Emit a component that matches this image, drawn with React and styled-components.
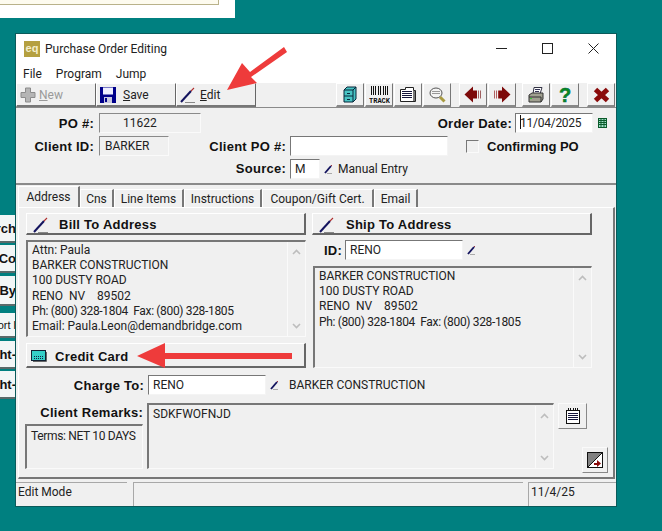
import React from 'react';
import styled, { createGlobalStyle } from 'styled-components';

const ui = 'Roboto, "Open Sans", sans-serif';
const bold = '"Liberation Sans", Arial, sans-serif';

const Global = createGlobalStyle`
  html, body { margin: 0; padding: 0; height: 100%; overflow: hidden; }
  body { background: #008080; font-family: ${ui}; font-size: 12px; color: #222; }
`;

const Desktop = styled.div`
  position: relative;
  width: 662px;
  height: 531px;
  overflow: hidden;
  background: #008080;
`;

const Backdrop = styled.div`
  position: absolute;
  left: 0;
  top: 0;
  width: 235px;
  height: 18px;
  background: #fff;
`;

const BackdropBox = styled.div`
  width: 218px;
  height: 4px;
  background: #fdfbef;
  border: solid #b9b28a;
  border-width: 0 1px 1px 0;
`;

const SideStack = styled.div`
  position: absolute;
  left: 0;
  top: 215px;
  width: 16px;
  height: 185px;
  overflow: hidden;
  display: flex;
  flex-direction: column;
`;

const SideButton = styled.div`
  height: ${(p) => p.$h}px;
  margin-top: ${(p) => p.$gap || 0}px;
  flex: none;
  box-sizing: border-box;
  background: #f2f6f6;
  border-bottom: 2px solid #5a6a6a;
  display: flex;
  align-items: center;
  justify-content: flex-end;
  white-space: nowrap;
  font: ${(p) => (p.$light ? 'normal 11px' : 'bold 13px')} ${bold};
  color: #111;
  overflow: hidden;
`;

const Win = styled.div`
  position: absolute;
  left: 16px;
  top: 34px;
  width: 600px;
  height: 472px;
  background: #f0f0f0;
  box-shadow: 0 0 0 1px #0a5a5a;
  display: flex;
  flex-direction: column;
`;

const TitleBar = styled.div`
  height: 29px;
  background: #fff;
  display: flex;
  align-items: center;
  padding-left: 8px;
  flex: none;
`;

const AppIcon = styled.div`
  width: 16px;
  height: 16px;
  background: #b5a040;
  color: #f4eecb;
  font: bold 11px/15px ${bold};
  text-align: center;
`;

const Title = styled.div`
  margin-left: 5px;
  font-size: 12px;
  flex: 1;
  color: #222;
`;

const Caption = styled.div`
  display: flex;
  align-items: center;
`;

const CaptionBtn = styled.div`
  width: 46px;
  height: 29px;
  display: flex;
  align-items: center;
  justify-content: center;
`;

const MenuBar = styled.div`
  height: 20px;
  padding-top: 1px;
  box-sizing: border-box;
  background: #fff;
  display: flex;
  align-items: center;
  gap: 14px;
  padding-left: 7px;
  flex: none;
  font-size: 12px;
`;

const Toolbar = styled.div`
  height: 25px;
  display: flex;
  flex: none;
  border-bottom: 1px solid #8a8a8a;
  box-sizing: border-box;
`;

const TextTool = styled.div`
  width: 80px;
  height: 24px;
  box-sizing: border-box;
  display: flex;
  align-items: center;
  gap: ${(p) => p.$gap}px;
  padding: 1px 0 0 3px;
  border-left: 1px solid #fff;
  border-top: 1px solid #fff;
  border-right: 1px solid #666;
  border-bottom: 2px solid #777;
  font-size: 12px;
  color: ${(p) => (p.$off ? '#9a9a9a' : '#222')};
  u { text-decoration: underline; }
`;

const IconTools = styled.div`
  margin-left: auto;
  display: flex;
  gap: 1px;
  padding-right: 1px;
`;

const IconTool = styled.div`
  width: 28px;
  height: 24px;
  box-sizing: border-box;
  margin-left: ${(p) => p.$gap || 0}px;
  display: flex;
  align-items: center;
  justify-content: center;
  border-left: 1px solid #fff;
  border-top: 1px solid #fff;
  border-right: 1px solid #777;
  border-bottom: 2px solid #888;
`;

const Header = styled.div`
  height: 75px;
  flex: none;
  padding: 4px 0 0;
  box-sizing: border-box;
  display: grid;
  grid-template-rows: 22px 22px 21px;
  row-gap: 1px;
`;

const Row = styled.div`
  display: flex;
  align-items: center;
`;

const Label = styled.div`
  font: bold 13px ${bold};
  letter-spacing: ${(p) => (p.$left ? 0 : 0.25)}px;
  color: #111;
  text-align: ${(p) => (p.$left ? 'left' : 'right')};
  width: ${(p) => p.$w}px;
  flex: none;
  white-space: nowrap;
  margin-left: ${(p) => p.$ml || 0}px;
`;

const ReadOnly = styled.div`
  box-sizing: border-box;
  width: ${(p) => p.$w}px;
  height: 20px;
  margin-left: 5px;
  padding-left: ${(p) => p.$pl || 5}px;
  flex: none;
  background: #f0f0f0;
  border: 1px solid #fafafa;
  border-top-color: #8a8a8a;
  border-left-color: #8a8a8a;
  font-size: 12px;
  line-height: 18px;
`;

const Field = styled.div`
  box-sizing: border-box;
  width: ${(p) => p.$w}px;
  height: 20px;
  margin-left: ${(p) => p.$ml || 3}px;
  padding-left: 4px;
  flex: none;
  background: #fff;
  border: 1px solid #f4f4f4;
  border-top: 1px solid #777;
  border-left: 1px solid #777;
  font-size: 12px;
  line-height: 18px;
`;

const Caret = styled.span`
  display: inline-block;
  width: 1px;
  height: 14px;
  background: #111;
  vertical-align: -2px;
  margin-right: -1px;
`;

const Check = styled.div`
  width: 11px;
  height: 11px;
  flex: none;
  margin-left: ${(p) => p.$ml}px;
  background: #f0f0f0;
  border: 1px solid #fafafa;
  border-top-color: #777;
  border-left-color: #777;
`;

const IconSlot = styled.span`
  display: flex;
  flex: none;
  margin-left: ${(p) => p.$ml}px;
`;

const Plain = styled.div`
  font-size: 12px;
  margin-left: ${(p) => p.$ml || 0}px;
  white-space: nowrap;
`;

const TabStrip = styled.div`
  height: 24px;
  flex: none;
  border-top: 2px solid #8a8a8a;
  box-sizing: border-box;
  display: flex;
  align-items: flex-end;
  padding-left: 2px;
`;

const Tab = styled.div`
  width: ${(p) => p.$w}px;
  height: ${(p) => (p.$on ? 21 : 18)}px;
  box-sizing: border-box;
  border-left: 1px solid #fff;
  border-right: 2px solid #777;
  border-top: 1px solid #fff;
  display: flex;
  align-items: center;
  justify-content: center;
  font-size: 12px;
  white-space: nowrap;
  background: #f0f0f0;
`;

const Page = styled.div`
  flex: 1;
  margin: 0 1px 3px 2px;
  border-left: 1px solid #fff;
  border-top: 1px solid #fff;
  border-right: 2px solid #777;
  border-bottom: 2px solid #777;
  padding: 5px 0 0 7px;
  display: flex;
  flex-direction: column;
  min-height: 0;
`;

const Columns = styled.div`
  display: flex;
  gap: 6px;
  flex: none;
`;

const Col = styled.div`
  width: 280px;
  display: flex;
  flex-direction: column;
`;

const BigButton = styled.div`
  height: ${(p) => p.$h || 22}px;
  margin-top: ${(p) => p.$mt || 0}px;
  box-sizing: border-box;
  display: flex;
  align-items: center;
  gap: ${(p) => p.$gap || 10}px;
  padding: 2px 0 0 ${(p) => p.$pl || 6}px;
  font: bold 13px ${bold};
  letter-spacing: 0.25px;
  color: #111;
  border-left: 1px solid #fff;
  border-top: 1px solid #fff;
  border-right: 2px solid #666;
  border-bottom: 2px solid #666;
`;

const Memo = styled.div`
  box-sizing: border-box;
  height: ${(p) => p.$h}px;
  margin-top: ${(p) => p.$mt || 0}px;
  margin-left: ${(p) => p.$ml || 0}px;
  width: ${(p) => (p.$w ? `${p.$w}px` : 'auto')};
  border: 1px solid #fafafa;
  border-top: 2px solid #777;
  border-left: 2px solid #777;
  padding: ${(p) => p.$pt || 1}px 0 0 4px;
  font-size: 12px;
  line-height: 15.2px;
  color: #222;
  display: flex;
  white-space: pre;
  flex: none;
`;

const MemoText = styled.div`
  flex: 1;
`;

const Tight = styled.span`
  letter-spacing: ${(p) => p.$by || -0.34}px;
`;

const ScrollTrack = styled.div`
  width: 17px;
  flex: none;
  margin-top: -1px;
  border-left: 1px solid #fafafa;
  display: flex;
  flex-direction: column;
  justify-content: space-between;
  align-items: center;
  padding: 7px 0;
  color: #bdbdbd;
`;

const IdRow = styled(Row)`
  height: 20px;
  margin-top: 5px;
`;

const ChargeRow = styled(Row)`
  margin-top: 7px;
  height: 20px;
  flex: none;
`;

const RemarksArea = styled.div`
  display: flex;
  margin-top: 8px;
`;

const RemarksLeft = styled.div`
  width: 118px;
  margin-left: -1px;
  flex: none;
  display: flex;
  flex-direction: column;
`;

const RemarksLabel = styled(Label)`
  height: 21px;
  line-height: 20px;
`;

const RemarksSide = styled.div`
  width: 56px;
  flex: none;
  display: flex;
  flex-direction: column;
  align-items: flex-start;
  padding-left: 4px;
`;

const SmallBtn = styled.div`
  width: ${(p) => p.$w || 29}px;
  height: 26px;
  box-sizing: border-box;
  display: flex;
  align-items: center;
  justify-content: center;
  margin-left: ${(p) => p.$ml || 0}px;
  margin-top: ${(p) => p.$mt || 0}px;
  border: 1px solid #fafafa;
  border-right: 1px solid #888;
  border-bottom: 1px solid #888;
`;

const StatusBar = styled.div`
  height: 24px;
  flex: none;
  display: flex;
  box-sizing: border-box;
  font-size: 12px;
`;

const StatusCell = styled.div`
  box-sizing: border-box;
  width: ${(p) => p.$w || 'auto'};
  flex: ${(p) => (p.$grow ? 1 : 'none')};
  margin-left: ${(p) => p.$ml || 0}px;
  padding: 2px 0 0 2px;
  border-left: ${(p) => (p.$edge ? '1px solid #a8a8a8' : 'none')};
  border-top: 1px solid #a8a8a8;
`;

const Arrow = styled.svg`
  position: absolute;
  pointer-events: none;
  left: 0;
  top: 0;
`;

const Pen = ({ s = 16 }) => (
  <svg width={s} height={s} viewBox="0 0 16 16">
    <path d="M1 15 L11 4" stroke="#14145e" strokeWidth="2" />
    <path d="M11 4 L14 1" stroke="#b03030" strokeWidth="1.1" />
    <path d="M5 15.5 H15" stroke="#888" strokeWidth="1" />
  </svg>
);

const SmallPen = () => (
  <svg width="9" height="10" viewBox="0 0 9 10">
    <path d="M1 9 L7 2" stroke="#14145e" strokeWidth="1.9" />
    <path d="M7 2 L8 1" stroke="#a03040" strokeWidth="1" />
    <path d="M3 9.5 H8" stroke="#999" strokeWidth="0.8" />
  </svg>
);

const Plus = () => (
  <svg width="16" height="16" viewBox="0 0 16 16">
    <path d="M5.5 1h5v4.5H15v5h-4.5V15h-5v-4.5H1v-5h4.5z" fill="#b5b5b5" stroke="#8c8c8c" />
  </svg>
);

const Floppy = () => (
  <svg width="16" height="16" viewBox="0 0 16 16">
    <rect x="0" y="0" width="16" height="16" fill="#00008a" />
    <rect x="3" y="0.5" width="10" height="7" fill="#eef" />
    <rect x="4" y="10" width="8" height="6" fill="#c8c8e0" />
    <rect x="5" y="11" width="2" height="4" fill="#00008a" />
  </svg>
);

const Cabinet = () => (
  <svg width="14" height="17" viewBox="0 0 14 17">
    <path d="M1 4 L4 1 H13 V13 L10 16 H1 Z" fill="#48c4c4" stroke="#06263a" />
    <path d="M1 4 H10 V16 M10 4 L13 1 M1 10 H10" fill="none" stroke="#06263a" />
    <path d="M4 7.5 H7 M4 13.5 H7" stroke="#06263a" />
  </svg>
);

const Track = () => (
  <svg width="21" height="17" viewBox="0 0 21 17">
    <path d="M2.5 0v9M4.5 0v9M6.5 0v9M9.5 0v9M11.5 0v9M14.5 0v9M16.5 0v9M18.5 0v9" stroke="#111" strokeWidth="1" />
    <text x="10.5" y="16.5" textAnchor="middle" fontFamily="Liberation Mono, monospace" fontSize="7" fontWeight="bold" fill="#111">TRACK</text>
  </svg>
);

const Folder = () => (
  <svg width="16" height="15" viewBox="0 0 16 15">
    <path d="M0.5 2.5 H5.5 V0.5 H13.5 V3.5 H15.5 V14.5 H0.5 Z" fill="#fff" stroke="#222" />
    <path d="M2 4.5H12M2 6.5H12M2 8.5H12M2 10.5H12" stroke="#14143a" />
    <path d="M14 4V14" stroke="#777" strokeWidth="2" />
  </svg>
);

const Lens = () => (
  <svg width="17" height="16" viewBox="0 0 17 16">
    <ellipse cx="7" cy="6" rx="6" ry="5" fill="#f4f4f4" stroke="#555" />
    <path d="M3 4.5H11M3 6.5H11" stroke="#999" />
    <path d="M11 10 L15.5 14.5" stroke="#a89a40" strokeWidth="3" />
  </svg>
);

const ArrowLeft = () => (
  <svg width="18" height="17" viewBox="0 0 18 17">
    <path d="M0.5 8.5 L9 0.5 V4.5 H12 V12.5 H9 V16.5 Z" fill="#7d0a0a" />
    <path d="M12.5 4.5V12.5" stroke="#7d0a0a" />
    <path d="M14.5 4.5V12.5M16.5 4.5V12.5" stroke="#a06060" />
  </svg>
);

const ArrowRight = () => (
  <svg width="18" height="17" viewBox="0 0 18 17">
    <path d="M17.5 8.5 L9 0.5 V4.5 H6 V12.5 H9 V16.5 Z" fill="#7d0a0a" />
    <path d="M5.5 4.5V12.5" stroke="#a03030" />
    <path d="M3.5 4.5V12.5M1.5 4.5V12.5" stroke="#b06060" />
  </svg>
);

const Printer = () => (
  <svg width="16" height="16" viewBox="0 0 16 16">
    <path d="M6 0.5 H14 L12 7 H5 Z" fill="#fff" stroke="#334" />
    <path d="M7 2.5H12M7 4.5H11" stroke="#335" />
    <path d="M1 8 L4 6 H15 V12 L13 15 H1 Z" fill="#a0a090" stroke="#333" />
    <path d="M1 10 H13 V15" fill="none" stroke="#333" />
    <rect x="2" y="11" width="2" height="1" fill="#3c3" />
  </svg>
);

const Help = () => (
  <svg width="14" height="18" viewBox="0 0 14 18">
    <text x="7" y="16" textAnchor="middle" fontFamily="Liberation Sans, sans-serif" fontSize="20" fontWeight="bold" fill="#0a8a20" stroke="#064" strokeWidth="0.5">?</text>
  </svg>
);

const CloseX = () => (
  <svg width="17" height="16" viewBox="0 0 17 16">
    <path d="M2.5 2.5 L14.5 13.5 M14.5 2.5 L2.5 13.5" stroke="#8a0a0a" strokeWidth="5" />
  </svg>
);

const CalGrid = () => (
  <svg width="9" height="10" viewBox="0 0 9 10">
    <rect x="0.5" y="0.5" width="8" height="9" fill="#9fe0c8" stroke="#0a5a2a" />
    <path d="M0 2.5H9M0 4.5H9M0 6.5H9M3 0V10M6 0V10" stroke="#0a5a2a" />
  </svg>
);

const CardIcon = () => (
  <svg width="16" height="12" viewBox="0 0 16 12">
    <rect x="0.5" y="0.5" width="14" height="10" fill="#35d0c8" stroke="#123" />
    <path d="M15.5 2V11.5H2" fill="none" stroke="#666" />
    <path d="M3 6.5H13" stroke="#124" strokeDasharray="1 1" />
    <path d="M3 8.5H13" stroke="#124" strokeDasharray="1 1" />
  </svg>
);

const Notepad = () => (
  <svg width="16" height="16" viewBox="0 0 16 16">
    <rect x="1.5" y="2.5" width="13" height="13" fill="#fff" stroke="#111" />
    <path d="M3.5 0V3M5.5 0V3M8.5 0V3M10.5 0V3M12.5 0V3" stroke="#111" />
    <path d="M3 5.5H13M3 7.5H13M3 9.5H13M3 11.5H13" stroke="#14143a" />
  </svg>
);

const Expand = () => (
  <svg width="16" height="16" viewBox="0 0 16 16">
    <rect x="0.5" y="0.5" width="15" height="15" fill="#fff" stroke="#111" />
    <path d="M0.5 15.5 V0.5 H15.5 Z" fill="#808080" stroke="#111" />
    <path d="M7 11 H10 V8 L14 11.5 L10 15 V13 H7 Z" fill="#8a0a0a" />
  </svg>
);

const Up = () => (
  <svg width="9" height="6" viewBox="0 0 9 6">
    <path d="M1 5 L4.5 1.5 L8 5" fill="none" stroke="currentColor" strokeWidth="1.6" />
  </svg>
);

const Down = () => (
  <svg width="9" height="6" viewBox="0 0 9 6">
    <path d="M1 1 L4.5 4.5 L8 1" fill="none" stroke="currentColor" strokeWidth="1.6" />
  </svg>
);

const Scroll = () => (
  <ScrollTrack>
    <Up />
    <Down />
  </ScrollTrack>
);

export default function App() {
  return (
    <Desktop>
      <Global />
      <Backdrop>
        <BackdropBox />
      </Backdrop>
      <SideStack>
        <SideButton $h={28}>rch</SideButton>
        <SideButton $h={28} $gap={2}>Co</SideButton>
        <SideButton $h={30} $gap={3}>-By</SideButton>
        <SideButton $h={25} $gap={7} $light>ort l</SideButton>
        <SideButton $h={28} $gap={3}>ht-</SideButton>
        <SideButton $h={28} $gap={2}>ht-</SideButton>
      </SideStack>
      <Win>
        <TitleBar>
          <AppIcon>eq</AppIcon>
          <Title>Purchase Order Editing</Title>
          <Caption>
            <CaptionBtn>
              <svg width="11" height="11" viewBox="0 0 11 11"><path d="M0 5.5H11" stroke="#222" /></svg>
            </CaptionBtn>
            <CaptionBtn>
              <svg width="11" height="11" viewBox="0 0 11 11"><rect x="0.5" y="0.5" width="10" height="10" fill="none" stroke="#222" /></svg>
            </CaptionBtn>
            <CaptionBtn>
              <svg width="11" height="11" viewBox="0 0 11 11"><path d="M0.5 0.5L10.5 10.5M10.5 0.5L0.5 10.5" stroke="#222" /></svg>
            </CaptionBtn>
          </Caption>
        </TitleBar>
        <MenuBar>
          <span>File</span>
          <span>Program</span>
          <span>Jump</span>
        </MenuBar>
        <Toolbar>
          <TextTool $off $gap={3}><Plus /><span><u>N</u>ew</span></TextTool>
          <TextTool $gap={7}><Floppy /><span><u>S</u>ave</span></TextTool>
          <TextTool $gap={4}><Pen /><span><u>E</u>dit</span></TextTool>
          <IconTools>
            <IconTool><Cabinet /></IconTool>
            <IconTool><Track /></IconTool>
            <IconTool><Folder /></IconTool>
            <IconTool><Lens /></IconTool>
            <IconTool $gap={7}><ArrowLeft /></IconTool>
            <IconTool><ArrowRight /></IconTool>
            <IconTool $gap={5}><Printer /></IconTool>
            <IconTool><Help /></IconTool>
            <IconTool $gap={7}><CloseX /></IconTool>
          </IconTools>
        </Toolbar>
        <Header>
          <Row>
            <Label $w={78}>PO #:</Label>
            <ReadOnly $w={102} $pl={23}>11622</ReadOnly>
            <Label $w={311}>Order Date:</Label>
            <Field $w={78}><Caret /><Tight $by={-0.25}>11/04/2025</Tight></Field>
            <IconSlot $ml={5}><CalGrid /></IconSlot>
          </Row>
          <Row>
            <Label $w={78}>Client ID:</Label>
            <ReadOnly $w={70}>BARKER</ReadOnly>
            <Label $w={117}>Client PO #:</Label>
            <Field $w={158} $ml={4} />
            <Check $ml={18} />
            <Label $w={100} $left $ml={8}>Confirming PO</Label>
          </Row>
          <Row>
            <Label $w={270}>Source:</Label>
            <Field $w={30} $ml={4}>M</Field>
            <IconSlot $ml={4}><SmallPen /></IconSlot>
            <Plain $ml={5}>Manual Entry</Plain>
          </Row>
        </Header>
        <TabStrip>
          <Tab $on $w={62}>Address</Tab>
          <Tab $w={34}>Cns</Tab>
          <Tab $w={70}>Line Items</Tab>
          <Tab $w={78}>Instructions</Tab>
          <Tab $w={112}>Coupon/Gift Cert.</Tab>
          <Tab $w={44}>Email</Tab>
        </TabStrip>
        <Page>
          <Columns>
            <Col>
              <BigButton><Pen />Bill To Address</BigButton>
              <Memo $h={97} $mt={5}>
                <MemoText>
                  {`Attn: Paula
BARKER CONSTRUCTION
100 DUSTY ROAD
RENO  NV    89502
`}
                  <Tight>Ph: (800) 328-1804  Fax: (800) 328-1805</Tight>
                  {`
Email: Paula.Leon@demandbridge.com`}
                </MemoText>
                <Scroll />
              </Memo>
              <BigButton $h={25} $mt={6} $pl={4} $gap={8}><CardIcon />Credit Card</BigButton>
            </Col>
            <Col>
              <BigButton $gap={11}><Pen />Ship To Address</BigButton>
              <IdRow>
                <Label $w={30}>ID:</Label>
                <Field $w={118}>RENO</Field>
                <IconSlot $ml={4}><SmallPen /></IconSlot>
              </IdRow>
              <Memo $h={102} $mt={6} $ml={1}>
                <MemoText>
                  {`BARKER CONSTRUCTION
100 DUSTY ROAD
RENO  NV    89502
`}
                  <Tight>Ph: (800) 328-1804  Fax: (800) 328-1805</Tight>
                </MemoText>
                <Scroll />
              </Memo>
            </Col>
          </Columns>
          <ChargeRow>
            <Label $w={118}>Charge To:</Label>
            <Field $w={118} $ml={4}>RENO</Field>
            <IconSlot $ml={4}><SmallPen /></IconSlot>
            <Plain $ml={10}>BARKER CONSTRUCTION</Plain>
          </ChargeRow>
          <RemarksArea>
            <RemarksLeft>
              <RemarksLabel $w={118}>Client Remarks:</RemarksLabel>
              <Memo $h={45} $pt={3}><MemoText><Tight>Terms: NET 10 DAYS</Tight></MemoText></Memo>
            </RemarksLeft>
            <Memo $h={66} $ml={4} $w={407} $pt={2}>
              <MemoText>SDKFWOFNJD</MemoText>
              <Scroll />
            </Memo>
            <RemarksSide>
              <SmallBtn><Notepad /></SmallBtn>
              <SmallBtn $w={26} $ml={24} $mt={18}><Expand /></SmallBtn>
            </RemarksSide>
          </RemarksArea>
        </Page>
        <StatusBar>
          <StatusCell $w="111px">Edit Mode</StatusCell>
          <StatusCell $grow $edge $ml={6} />
          <StatusCell $w="88px" $edge $ml={5}>11/4/25</StatusCell>
        </StatusBar>
      </Win>
      <Arrow width="662" height="531" viewBox="0 0 662 531">
        <path d="M284 47 L250 72 L242 63 L227 90 L257 83 L251 77 L287 52 Z" fill="#ee3b3b" />
        <path d="M292 353 H165 V343 L137 356 L165 368 V359 H292 Z" fill="#ee3b3b" />
      </Arrow>
    </Desktop>
  );
}
